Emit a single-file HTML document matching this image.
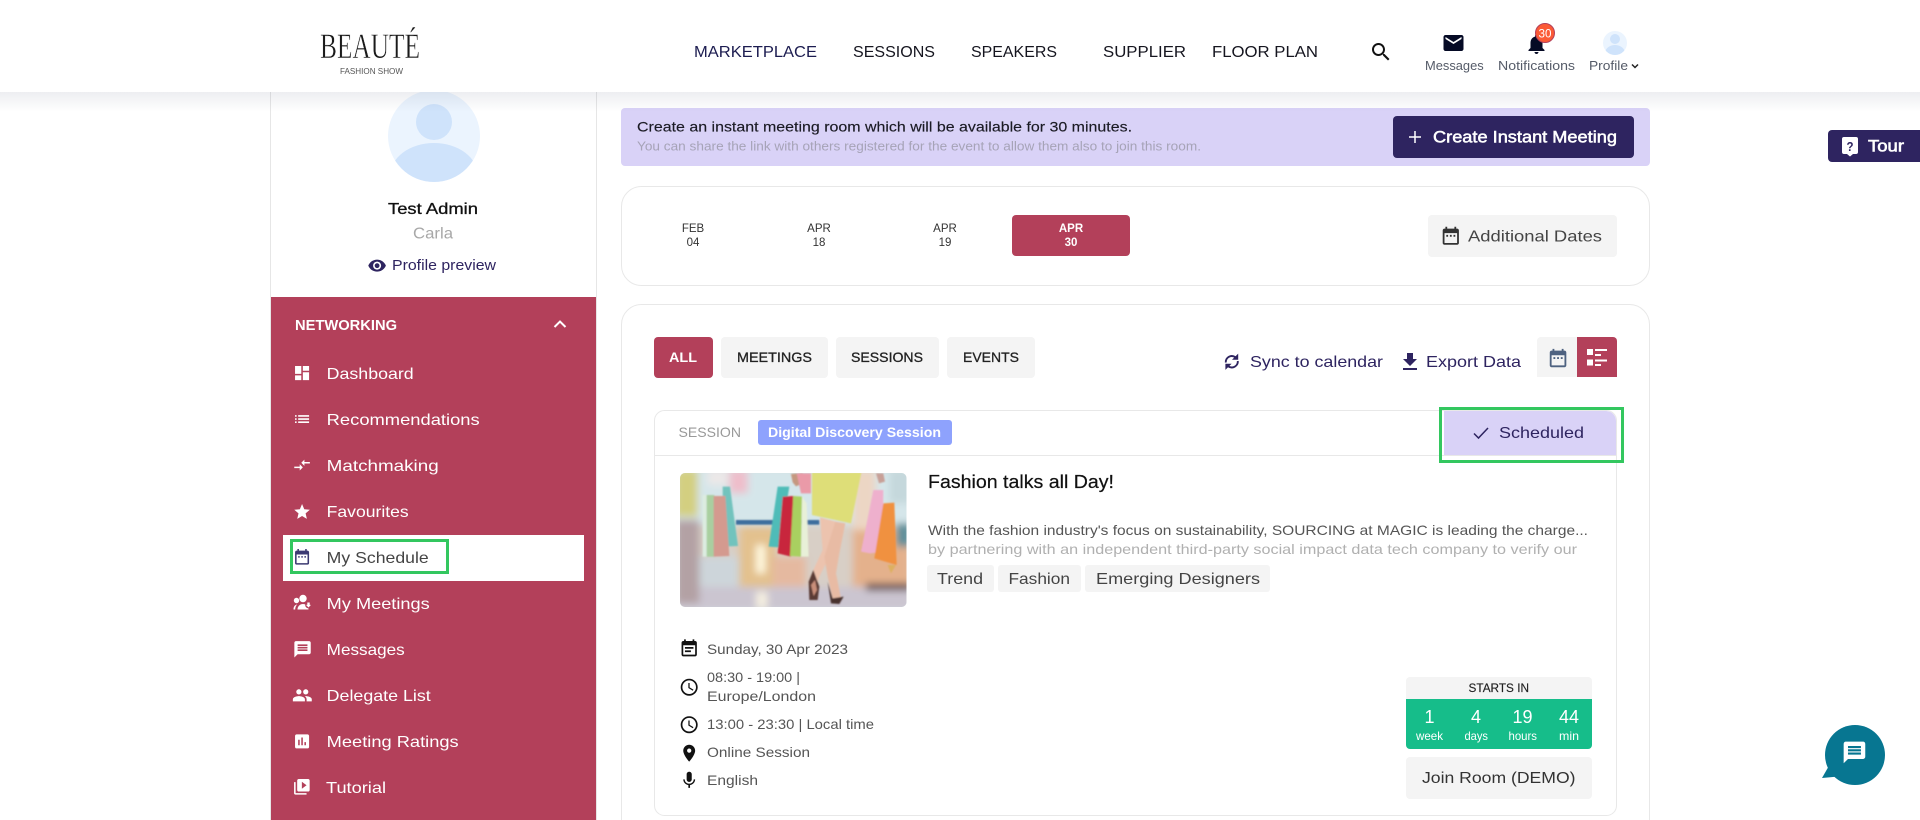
<!DOCTYPE html>
<html lang="en"><head><meta charset="utf-8"><title>My Schedule</title>
<style>
html,body{margin:0;padding:0;background:#fff;width:1920px;height:820px;overflow:hidden}
svg{display:block;position:absolute;left:0;top:0}
text{font-family:"Liberation Sans",Arial,sans-serif;font-size:16px;fill:#444;white-space:pre}
.m{stroke-width:.3px}
.s{font-size:16px;fill:#fff}
.b{font-weight:700}
.i{font-size:14px;fill:#555}
.nav{font-size:16px;fill:#15151f}
.top{font-size:13px;fill:#555b68}
.pu{fill:#2e2460}
.d{font-size:11.5px;fill:#333;text-anchor:middle}
</style></head><body>
<svg width="1920" height="820" viewBox="0 0 1920 820" xmlns="http://www.w3.org/2000/svg">
<defs>
<linearGradient id="sh" x1="0" y1="0" x2="0" y2="1"><stop offset="0" stop-color="#1e2a50" stop-opacity=".08"/><stop offset="1" stop-color="#1e2a50" stop-opacity="0"/></linearGradient>
<clipPath id="av"><circle cx="434" cy="136" r="46"/></clipPath>
<clipPath id="av2"><circle cx="1615" cy="43" r="12"/></clipPath>
<clipPath id="ph"><rect x="680" y="473" width="226.500" height="134" rx="5"/></clipPath>
<filter id="bl" x="-10%" y="-10%" width="120%" height="120%"><feGaussianBlur stdDeviation="11"/></filter>
<filter id="bl2" x="-10%" y="-10%" width="120%" height="120%"><feGaussianBlur stdDeviation="2.200"/></filter>
</defs>

<!-- sidebar -->
<path d="M270.500 820V92M596.500 820V92" fill="none" stroke="#e6e6e6"/>
<g clip-path="url(#av)"><rect x="388" y="90" width="92" height="92" fill="#ebf4fe"/><ellipse cx="434" cy="176" rx="44" ry="33" fill="#cfe3fb"/><circle cx="434" cy="122" r="18" fill="#cfe3fb"/></g>
<text x="388" y="214" textLength="90" lengthAdjust="spacingAndGlyphs" class="m" style="fill:#111;stroke:#111">Test Admin</text>
<text x="413" y="238.500" textLength="40" lengthAdjust="spacingAndGlyphs" style="fill:#a8a8a8">Carla</text>
<g transform="translate(367.500,256) scale(.8)"><path fill="#2e2460" d="M12 4.500C7 4.500 2.730 7.610 1 12c1.730 4.390 6 7.500 11 7.500s9.270-3.110 11-7.500c-1.730-4.390-6-7.500-11-7.500zM12 17c-2.760 0-5-2.240-5-5s2.240-5 5-5 5 2.240 5 5-2.240 5-5 5zm0-8c-1.660 0-3 1.340-3 3s1.340 3 3 3 3-1.340 3-3-1.340-3-3-3z"/></g>
<text x="392" y="270" textLength="104" lengthAdjust="spacingAndGlyphs" class="pu" style="font-size:14.500px">Profile preview</text>

<rect x="271" y="297" width="325" height="523" fill="#b3405a"/>
<text x="295" y="330" textLength="102" lengthAdjust="spacingAndGlyphs" class="b" style="font-size:14.500px;fill:#fff">NETWORKING</text>
<path d="M554.500 327l5.500-5.500 5.500 5.500" fill="none" stroke="#fff" stroke-width="2"/>

<rect x="283" y="535" width="301" height="46" fill="#fff"/>
<rect x="291.500" y="540.500" width="156" height="32" fill="none" stroke="#33c75f" stroke-width="3"/>

<g fill="#fff">
<g transform="translate(292.700,363.700) scale(.78)"><path d="M3 13h8V3H3v10zm0 8h8v-6H3v6zm10 0h8V11h-8v10zm0-18v6h8V3h-8z"/></g>
<g transform="translate(292.700,409.700) scale(.78)"><path d="M3 13h2v-2H3v2zm0 4h2v-2H3v2zm0-8h2V7H3v2zm4 4h14v-2H7v2zm0 4h14v-2H7v2zM7 7v2h14V7H7z"/></g>
<g transform="translate(292.700,455.700) scale(.78)"><path d="M9.010 14H2v2h7.010v3L13 15l-3.990-4v3zm5.980-1v-3H22V8h-7.010V5L11 9l3.990 4z"/></g>
<g transform="translate(292.700,502.500) scale(.78)"><path d="M12 17.270L18.180 21l-1.640-7.030L22 9.240l-7.190-.61L12 2 9.190 8.630 2 9.240l5.460 4.730L5.820 21z"/></g>
<!-- my meetings -->
<circle cx="303" cy="598.500" r="3.700"/><circle cx="296.500" cy="600.500" r="2.700"/>
<path d="M297.500 609.500c0-4 3.500-5.500 5.500-5.500s5.500 1.500 5.500 5.500z"/>
<path d="M293.500 609.500c0-3.200 1.600-4.700 3.700-5-1.300 1.300-2 2.900-2 5z"/>
<circle cx="308.500" cy="605" r="3.300" fill="#b3405a"/>
<path d="M307.300 602.500h2.400v2.400h1.300l-2.500 2.600-2.500-2.600h1.300z"/>
<g transform="translate(292.700,639.500) scale(.82)"><path d="M20 2H4c-1.100 0-1.990.9-1.990 2L2 22l4-4h14c1.100 0 2-.9 2-2V4c0-1.100-.9-2-2-2zm-2 12H6v-2h12v2zm0-3H6V9h12v2zm0-3H6V6h12v2z"/></g>
<g transform="translate(292,685) scale(.86)"><path d="M16 11c1.660 0 2.990-1.340 2.990-3S17.660 5 16 5c-1.660 0-3 1.340-3 3s1.340 3 3 3zm-8 0c1.660 0 2.990-1.340 2.990-3S9.660 5 8 5C6.340 5 5 6.340 5 8s1.340 3 3 3zm0 2c-2.330 0-7 1.170-7 3.500V19h14v-2.500c0-2.330-4.670-3.500-7-3.500zm8 0c-.29 0-.62.020-.97.050 1.160.84 1.970 1.970 1.970 3.450V19h6v-2.500c0-2.330-4.670-3.500-7-3.500z"/></g>
<g transform="translate(292.700,732) scale(.78)"><path d="M19 3H5c-1.100 0-2 .9-2 2v14c0 1.100.9 2 2 2h14c1.100 0 2-.9 2-2V5c0-1.100-.9-2-2-2zM9 17H7v-7h2v7zm4 0h-2V7h2v10zm4 0h-2v-4h2v4z"/></g>
<g transform="translate(292.500,777.500) scale(.78)"><path d="M4 6H2v14c0 1.100.9 2 2 2h14v-2H4V6zm16-4H8c-1.100 0-2 .9-2 2v12c0 1.100.9 2 2 2h12c1.100 0 2-.9 2-2V4c0-1.100-.9-2-2-2zm-8 12.500v-9l6 4.500-6 4.500z"/></g>
</g>
<g transform="translate(292.700,547.500) scale(.78)"><path fill="#3c3a72" d="M9 11H7v2h2v-2zm4 0h-2v2h2v-2zm4 0h-2v2h2v-2zm2-7h-1V2h-2v2H8V2H6v2H5c-1.110 0-1.990.9-1.990 2L3 20c0 1.100.89 2 2 2h14c1.100 0 2-.9 2-2V6c0-1.100-.9-2-2-2zm0 16H5V9h14v11z"/></g>

<text x="326.700" y="379" textLength="87" lengthAdjust="spacingAndGlyphs" class="s">Dashboard</text>
<text x="326.700" y="425" textLength="153" lengthAdjust="spacingAndGlyphs" class="s">Recommendations</text>
<text x="326.700" y="471" textLength="112" lengthAdjust="spacingAndGlyphs" class="s">Matchmaking</text>
<text x="326.700" y="517" textLength="82" lengthAdjust="spacingAndGlyphs" class="s">Favourites</text>
<text x="326.700" y="563" textLength="102" lengthAdjust="spacingAndGlyphs" style="fill:#444">My Schedule</text>
<text x="326.700" y="609" textLength="103" lengthAdjust="spacingAndGlyphs" class="s">My Meetings</text>
<text x="326.700" y="655" textLength="78" lengthAdjust="spacingAndGlyphs" class="s">Messages</text>
<text x="326.700" y="701" textLength="104" lengthAdjust="spacingAndGlyphs" class="s">Delegate List</text>
<text x="326.700" y="747" textLength="132" lengthAdjust="spacingAndGlyphs" class="s">Meeting Ratings</text>
<text x="326" y="793" textLength="60" lengthAdjust="spacingAndGlyphs" class="s">Tutorial</text>

<!-- banner -->
<rect x="621" y="108" width="1029" height="58" rx="4" fill="#d9d2f7"/>
<text x="637" y="131.500" textLength="495" lengthAdjust="spacingAndGlyphs" class="m" style="font-size:14px;fill:#1b1b24;stroke:#1b1b24;stroke-width:.15px">Create an instant meeting room which will be available for 30 minutes.</text>
<text x="637" y="150.500" textLength="564" lengthAdjust="spacingAndGlyphs" style="font-size:13px;fill:#a6a3b7">You can share the link with others registered for the event to allow them also to join this room.</text>
<rect x="1393" y="116" width="241" height="42" rx="4" fill="#2e2460"/>
<path d="M1415 131v12M1409 137h12" stroke="#fff" stroke-width="1.500" fill="none"/>
<text x="1433" y="142.500" textLength="184" lengthAdjust="spacingAndGlyphs" class="m" style="fill:#fff;stroke:#fff;stroke-width:.5px;font-size:16.500px">Create Instant Meeting</text>

<!-- header shadow + header -->
<rect x="0" y="92" width="1920" height="20" fill="url(#sh)"/>
<rect x="0" y="0" width="1920" height="92" fill="#fff"/>
<text x="320" y="58" textLength="100" lengthAdjust="spacingAndGlyphs" style="font-family:'Liberation Serif',serif;font-size:36px;fill:#1a1a1a;stroke:#fff;stroke-width:.45px">BEAUTÉ</text>
<text x="340" y="74" textLength="63" lengthAdjust="spacingAndGlyphs" style="font-size:8px;fill:#555">FASHION SHOW</text>

<text x="694" y="57" textLength="123" lengthAdjust="spacingAndGlyphs" class="nav" style="fill:#1c1c50">MARKETPLACE</text>
<text x="853" y="57" textLength="82" lengthAdjust="spacingAndGlyphs" class="nav">SESSIONS</text>
<text x="971" y="57" textLength="86" lengthAdjust="spacingAndGlyphs" class="nav">SPEAKERS</text>
<text x="1103" y="57" textLength="83" lengthAdjust="spacingAndGlyphs" class="nav">SUPPLIER</text>
<text x="1212" y="57" textLength="106" lengthAdjust="spacingAndGlyphs" class="nav">FLOOR PLAN</text>
<g transform="translate(1369,40) scale(1)"><path fill="#111" d="M15.500 14h-.79l-.28-.27C15.410 12.590 16 11.110 16 9.500 16 5.910 13.090 3 9.500 3S3 5.910 3 9.500 5.910 16 9.500 16c1.610 0 3.090-.59 4.230-1.570l.27.28v.79l5 4.990L20.490 19l-4.990-5zm-6 0C7.010 14 5 11.990 5 9.500S7.010 5 9.500 5 14 7.010 14 9.500 11.990 14 9.500 14z"/></g>
<g transform="translate(1441.500,31) scale(1)"><path fill="#050a25" d="M20 4H4c-1.100 0-1.990.9-1.990 2L2 18c0 1.100.9 2 2 2h16c1.100 0 2-.9 2-2V6c0-1.100-.9-2-2-2zm0 4l-8 5-8-5V6l8 5 8-5v2z"/></g>
<text x="1425" y="70" textLength="58.700" lengthAdjust="spacingAndGlyphs" class="top">Messages</text>
<g transform="translate(1524.500,32) scale(1)"><path fill="#050a25" d="M12 22c1.100 0 2-.9 2-2h-4c0 1.100.89 2 2 2zm6-6v-5c0-3.070-1.640-5.640-4.500-6.320V4c0-.83-.67-1.500-1.500-1.500s-1.500.67-1.500 1.500v.68C7.630 5.360 6 7.920 6 11v5l-2 2v1h16v-1l-2-2z"/></g>
<circle cx="1545" cy="33" r="9.500" fill="#fb5a36" stroke="#b3405a" stroke-width="1"/>
<text x="1538.500" y="37.500" textLength="13" lengthAdjust="spacingAndGlyphs" style="font-size:12px;fill:#fff">30</text>
<text x="1498" y="70" textLength="77" lengthAdjust="spacingAndGlyphs" class="top">Notifications</text>
<g clip-path="url(#av2)"><rect x="1603" y="31" width="24" height="24" fill="#ebf4fe"/><circle cx="1615" cy="39" r="5" fill="#cfe3fb"/><ellipse cx="1615" cy="53" rx="10" ry="8" fill="#cfe3fb"/></g>
<text x="1589" y="70" textLength="39" lengthAdjust="spacingAndGlyphs" class="top">Profile</text>
<path d="M1632 64.500l3 3 3-3" fill="none" stroke="#222" stroke-width="1.500"/>

<!-- tour -->
<path d="M1832 130h88v32h-88a4 4 0 0 1-4-4v-24a4 4 0 0 1 4-4z" fill="#2e2460"/>
<path d="M1844 137h12a2 2 0 0 1 2 2v13a2 2 0 0 1-2 2h-3l-3 2.500-3-2.500h-3a2 2 0 0 1-2-2v-13a2 2 0 0 1 2-2z" fill="#fff"/>
<text x="1846.500" y="151" textLength="7" lengthAdjust="spacingAndGlyphs" class="b" style="font-size:13px;fill:#2e2460">?</text>
<text x="1868" y="151.500" textLength="36" lengthAdjust="spacingAndGlyphs" class="m" style="fill:#fff;stroke:#fff;stroke-width:.6px;font-size:16.500px">Tour</text>

<!-- dates -->
<rect x="621.500" y="186.500" width="1028" height="99" rx="20" fill="#fff" stroke="#e8e8e8"/>
<text x="693" y="232" class="d">FEB</text><text x="693" y="246" class="d">04</text>
<text x="819" y="232" class="d">APR</text><text x="819" y="246" class="d">18</text>
<text x="945" y="232" class="d">APR</text><text x="945" y="246" class="d">19</text>
<rect x="1012" y="215" width="118" height="41" rx="4" fill="#b3405a"/>
<text x="1071" y="232" class="d b" style="fill:#fff">APR</text><text x="1071" y="246" class="d b" style="fill:#fff">30</text>
<rect x="1428" y="215" width="189" height="42" rx="4" fill="#f4f4f4"/>
<g transform="translate(1440,225) scale(.9)"><path fill="#333" d="M9 11H7v2h2v-2zm4 0h-2v2h2v-2zm4 0h-2v2h2v-2zm2-7h-1V2h-2v2H8V2H6v2H5c-1.110 0-1.990.9-1.990 2L3 20c0 1.100.89 2 2 2h14c1.100 0 2-.9 2-2V6c0-1.100-.9-2-2-2zm0 16H5V9h14v11z"/></g>
<text x="1468" y="241.500" textLength="134" lengthAdjust="spacingAndGlyphs">Additional Dates</text>

<!-- main card -->
<path d="M621.500 820V324.500a20 20 0 0 1 20-20h988a20 20 0 0 1 20 20V820" fill="none" stroke="#e8e8e8"/>
<rect x="654" y="337" width="59" height="41" rx="4" fill="#b3405a"/>
<rect x="721" y="337" width="107" height="41" rx="4" fill="#f4f4f4"/>
<rect x="836" y="337" width="103" height="41" rx="4" fill="#f4f4f4"/>
<rect x="947" y="337" width="88" height="41" rx="4" fill="#f4f4f4"/>
<text x="669" y="362" textLength="28" lengthAdjust="spacingAndGlyphs" class="b" style="font-size:14px;fill:#fff">ALL</text>
<g style="stroke:#222;stroke-width:.3px">
<text x="737" y="362" textLength="75" lengthAdjust="spacingAndGlyphs" style="font-size:14px;fill:#222">MEETINGS</text>
<text x="851" y="362" textLength="72" lengthAdjust="spacingAndGlyphs" style="font-size:14px;fill:#222">SESSIONS</text>
<text x="963" y="362" textLength="56" lengthAdjust="spacingAndGlyphs" style="font-size:14px;fill:#222">EVENTS</text>
</g>
<!-- sync -->
<g fill="none" stroke="#2e2460" stroke-width="1.900">
<path d="M1225.800 362.500a6 6 0 0 1 9.500-5.300"/>
<path d="M1237.800 361a6 6 0 0 1-9.500 5.300"/>
</g>
<path fill="#2e2460" d="M1238.200 353.600v6.200h-6.200zM1225.400 369.900v-6.200h6.200z"/>
<text x="1250" y="367" textLength="133" lengthAdjust="spacingAndGlyphs" class="pu">Sync to calendar</text>
<g transform="translate(1398,350)"><path fill="#2e2460" d="M19 9h-4V3H9v6H5l7 7 7-7zM5 18v2h14v-2H5z"/></g>
<text x="1426" y="367" textLength="95" lengthAdjust="spacingAndGlyphs" class="pu">Export Data</text>
<path d="M1541 337h36v40h-40v-36a4 4 0 0 1 4-4z" fill="#f4f4f4"/>
<g transform="translate(1547,347) scale(.92)"><path fill="#4e6280" d="M9 11H7v2h2v-2zm4 0h-2v2h2v-2zm4 0h-2v2h2v-2zm2-7h-1V2h-2v2H8V2H6v2H5c-1.110 0-1.990.9-1.990 2L3 20c0 1.100.89 2 2 2h14c1.100 0 2-.9 2-2V6c0-1.100-.9-2-2-2zm0 16H5V9h14v11z"/></g>
<path d="M1577 337h36a4 4 0 0 1 4 4v36h-40z" fill="#b3405a"/>
<g fill="#fff"><rect x="1587" y="349" width="6" height="6"/><rect x="1587" y="359.500" width="6" height="6"/><rect x="1595" y="349" width="12" height="2"/><rect x="1595" y="354" width="6" height="2"/><rect x="1595" y="359.500" width="12" height="2"/><rect x="1595" y="364" width="6" height="2"/></g>

<!-- session card -->
<rect x="654.500" y="410.500" width="962" height="405" rx="10" fill="#fff" stroke="#e8e8e8"/>
<line x1="655" y1="455.500" x2="1616" y2="455.500" stroke="#e8e8e8"/>
<text x="678.500" y="437" textLength="62.500" lengthAdjust="spacingAndGlyphs" style="font-size:14px;fill:#999">SESSION</text>
<rect x="758" y="420" width="194" height="25" rx="3" fill="#8ea2fd"/>
<text x="768" y="437" textLength="173" lengthAdjust="spacingAndGlyphs" class="b" style="font-size:14px;fill:#fff">Digital Discovery Session</text>
<path d="M1444 411h162a10 10 0 0 1 10 10v34h-172z" fill="#d9d2f7"/>
<rect x="1440.500" y="408.500" width="182" height="53" fill="none" stroke="#33c75f" stroke-width="3"/>
<path d="M1474 433.500l4.500 4.500 9.500-10" fill="none" stroke="#2e2460" stroke-width="1.500"/>
<text x="1499" y="438" textLength="85" lengthAdjust="spacingAndGlyphs" class="pu">Scheduled</text>

<!-- photo -->
<g clip-path="url(#ph)">
<rect x="680" y="473" width="227" height="134" fill="#d4dfe2"/>
<g transform="translate(676,470) scale(.33333)">
<g filter="url(#bl)">
<rect x="0" y="0" width="705" height="160" fill="#d5e6ea"/>
<rect x="0" y="165" width="705" height="190" fill="#d8cfc6"/>
<rect x="0" y="350" width="705" height="70" fill="#cbc5d0"/>
<rect x="0" y="0" width="65" height="140" fill="#d3cf80"/>
<rect x="0" y="150" width="70" height="250" fill="#b3a1a4"/>
<rect x="70" y="260" width="120" height="90" fill="#cdd5da"/>
<rect x="95" y="0" width="60" height="45" fill="#ece8e8"/>
<rect x="160" y="0" width="55" height="70" fill="#eebecb"/>
<rect x="190" y="170" width="110" height="180" fill="#e3c18e"/>
<rect x="240" y="225" width="28" height="85" fill="#fff8de"/>
<rect x="290" y="260" width="100" height="90" fill="#e5b9a0"/>
<rect x="530" y="0" width="70" height="260" fill="#ecd6c4"/>
<rect x="530" y="180" width="175" height="170" fill="#e4b18c"/>
<rect x="570" y="340" width="135" height="22" fill="#6a5555"/>
<rect x="640" y="0" width="65" height="100" fill="#c5d8dc"/>
<rect x="660" y="160" width="45" height="70" fill="#5f8f9a"/>
<rect x="240" y="365" width="35" height="50" fill="#f4eee0"/>
</g>
<g filter="url(#bl2)">
<rect x="180" y="150" width="250" height="14" fill="#3c6e9e"/>
<path d="M140 50h22l24 178-45 2z" fill="#72c3bd"/>
<rect x="80" y="75" width="13" height="185" fill="#dcece0"/>
<rect x="92" y="75" width="23" height="185" fill="#a9cfa0"/>
<path d="M113 78h35l12 180-47 2z" fill="#d49a8f"/>
<path d="M345 12l35-3 2 30-22 10-10-12z" fill="#c59880"/>
<path d="M362 10h43v60h-30z" fill="#ea9aa8"/>
<path d="M305 50h35l-30 182-32-2z" fill="#4fbcb8"/>
<path d="M320 80l32-2-7 182-40-10z" fill="#c8283c"/>
<path d="M352 78l26 2-3 180-33-2z" fill="#a9d060"/>
<path d="M378 80l14 20 6 160-23 0z" fill="#e8f0d8"/>
<path d="M408 8h148l-31 152-117-25z" fill="#dede78"/>
<path d="M432 142l48 13-10 85-40 80-20 65-8-5 10-80 28-60z" fill="#ecc3ae"/>
<path d="M478 155l30 5-18 90-10 60 15 75-25 0-15-65-10-60z" fill="#e8bba4"/>
<path d="M398 335l14-35 18 50-5 40-25 0z" fill="#5a3a35"/>
<path d="M405 345l12-15 6 30-10 18z" fill="#c98f7a"/>
<path d="M455 335l15 50 33-5-13 22-25-2z" fill="#4a302e"/>
<path d="M600 10l22 0 5 25-18 5z" fill="#c8a098"/>
<path d="M592 60h30l-2 185-38 5-27-5z" fill="#eeb0cd"/>
<path d="M622 100l33-2 7 187-67-20z" fill="#f0913f"/>
<path d="M635 285h25l-15 25z" fill="#ddb060"/>
</g>
</g>
</g>

<!-- session text -->
<text x="928" y="488" textLength="186" lengthAdjust="spacingAndGlyphs" class="m" style="font-size:18px;fill:#111;stroke:#111;stroke-width:.2px">Fashion talks all Day!</text>
<text x="928" y="535" textLength="660" lengthAdjust="spacingAndGlyphs" class="i">With the fashion industry's focus on sustainability, SOURCING at MAGIC is leading the charge...</text>
<text x="928" y="554" textLength="649" lengthAdjust="spacingAndGlyphs" class="i" style="fill:#b0b0b0">by partnering with an independent third-party social impact data tech company to verify our</text>
<rect x="927" y="565" width="67" height="27" rx="3" fill="#f4f4f4"/>
<rect x="998" y="565" width="83" height="27" rx="3" fill="#f4f4f4"/>
<rect x="1085" y="565" width="185" height="27" rx="3" fill="#f4f4f4"/>
<text x="937" y="584" textLength="46" lengthAdjust="spacingAndGlyphs">Trend</text>
<text x="1008.500" y="584" textLength="61.500" lengthAdjust="spacingAndGlyphs">Fashion</text>
<text x="1096" y="584" textLength="164" lengthAdjust="spacingAndGlyphs">Emerging Designers</text>

<!-- info rows -->
<g fill="#111">
<g transform="translate(679,638.500) scale(.85)"><path d="M17 10H7v2h10v-2zm2-7h-1V1h-2v2H8V1H6v2H5c-1.110 0-1.990.9-1.990 2L3 19c0 1.100.89 2 2 2h14c1.100 0 2-.9 2-2V5c0-1.100-.9-2-2-2zm0 16H5V8h14v11zm-5-5H7v2h7v-2z"/></g>
<g transform="translate(679,677) scale(.85)"><path d="M11.990 2C6.470 2 2 6.480 2 12s4.470 10 9.990 10C17.520 22 22 17.520 22 12S17.520 2 11.990 2zM12 20c-4.420 0-8-3.580-8-8s3.580-8 8-8 8 3.580 8 8-3.580 8-8 8zm.5-13H11v6l5.250 3.150.75-1.230-4.500-2.670z"/></g>
<g transform="translate(679,714.500) scale(.85)"><path d="M11.990 2C6.470 2 2 6.480 2 12s4.470 10 9.990 10C17.520 22 22 17.520 22 12S17.520 2 11.990 2zM12 20c-4.420 0-8-3.580-8-8s3.580-8 8-8 8 3.580 8 8-3.580 8-8 8zm.5-13H11v6l5.250 3.150.75-1.230-4.500-2.670z"/></g>
<g transform="translate(679,743) scale(.85)"><path d="M12 2C8.130 2 5 5.130 5 9c0 5.250 7 13 7 13s7-7.750 7-13c0-3.870-3.130-7-7-7zm0 9.500c-1.380 0-2.500-1.120-2.500-2.500s1.120-2.500 2.500-2.500 2.500 1.120 2.500 2.500-1.120 2.500-2.500 2.500z"/></g>
<g transform="translate(679,770) scale(.85)"><path d="M12 14c1.660 0 2.990-1.340 2.990-3L15 5c0-1.660-1.340-3-3-3S9 3.340 9 5v6c0 1.660 1.340 3 3 3zm5.300-3c0 3-2.540 5.100-5.300 5.100S6.700 14 6.700 11H5c0 3.410 2.720 6.230 6 6.720V21h2v-3.280c3.280-.48 6-3.300 6-6.720h-1.700z"/></g>
</g>
<text x="707" y="654" textLength="141" lengthAdjust="spacingAndGlyphs" class="i">Sunday, 30 Apr 2023</text>
<text x="707" y="682" textLength="93" lengthAdjust="spacingAndGlyphs" class="i">08:30 - 19:00 |</text>
<text x="707" y="701" textLength="109" lengthAdjust="spacingAndGlyphs" class="i">Europe/London</text>
<text x="707" y="729" textLength="167" lengthAdjust="spacingAndGlyphs" class="i">13:00 - 23:30 | Local time</text>
<text x="707" y="757" textLength="103" lengthAdjust="spacingAndGlyphs" class="i">Online Session</text>
<text x="707" y="785" textLength="51" lengthAdjust="spacingAndGlyphs" class="i">English</text>

<!-- countdown -->
<path d="M1410 677h178a4 4 0 0 1 4 4v18h-186v-18a4 4 0 0 1 4-4z" fill="#f4f4f4"/>
<path d="M1406 699h186v46a4 4 0 0 1-4 4h-178a4 4 0 0 1-4-4z" fill="#16bd8a"/>
<text x="1468.500" y="692" textLength="60.500" lengthAdjust="spacingAndGlyphs" class="m" style="font-size:12px;fill:#222;stroke:#222;stroke-width:.15px">STARTS IN</text>
<text x="1429.500" y="723" style="fill:#fff;font-size:18px;text-anchor:middle">1</text>
<text x="1476" y="723" style="fill:#fff;font-size:18px;text-anchor:middle">4</text>
<text x="1522.500" y="723" style="fill:#fff;font-size:18px;text-anchor:middle">19</text>
<text x="1569" y="723" style="fill:#fff;font-size:18px;text-anchor:middle">44</text>
<text x="1416" y="740" textLength="27" lengthAdjust="spacingAndGlyphs" style="font-size:12px;fill:#fff">week</text>
<text x="1464.500" y="740" textLength="23.500" lengthAdjust="spacingAndGlyphs" style="font-size:12px;fill:#fff">days</text>
<text x="1508.500" y="740" textLength="28.500" lengthAdjust="spacingAndGlyphs" style="font-size:12px;fill:#fff">hours</text>
<text x="1559" y="740" textLength="20" lengthAdjust="spacingAndGlyphs" style="font-size:12px;fill:#fff">min</text>
<rect x="1406" y="757" width="186" height="42" rx="4" fill="#f4f4f4"/>
<text x="1422" y="783" textLength="153.500" lengthAdjust="spacingAndGlyphs" style="fill:#333">Join Room (DEMO)</text>

<!-- chat -->
<path d="M1822 778l8-14 14 12z" fill="#077691"/>
<circle cx="1855" cy="755" r="30" fill="#077691"/>
<g transform="translate(1841.500,739.500) scale(1.080)"><path fill="#fff" d="M20 2H4c-1.100 0-1.990.9-1.990 2L2 22l4-4h14c1.100 0 2-.9 2-2V4c0-1.100-.9-2-2-2zm-2 12H6v-2h12v2zm0-3H6V9h12v2zm0-3H6V6h12v2z"/></g>
</svg>
</body></html>
